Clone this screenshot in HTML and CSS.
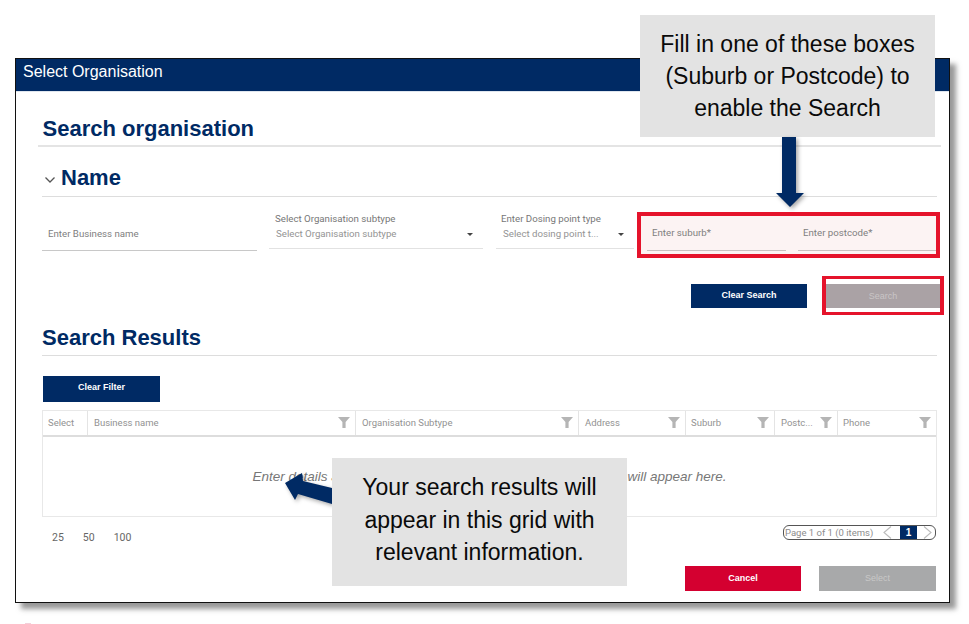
FILE: index.html
```html
<!DOCTYPE html>
<html lang="en">
<head>
<meta charset="utf-8">
<title>Select Organisation</title>
<link rel="stylesheet" href="styles.css">
</head>
<body>
<main class="window">
  <header class="titlebar">Select Organisation</header>
  <div class="content">
    <h1 class="h-main">Search organisation</h1>
    <div class="h-name">
      <svg class="chev" width="12" height="8" viewBox="0 0 12 8"><path d="M1.5 1.5 6 6l4.5-4.5" fill="none" stroke="#555" stroke-width="1.3"/></svg>
      <h2>Name</h2>
    </div>
    <div class="filters">
      <div class="field f-biz"><span class="val">Enter Business name</span></div>
      <div class="field f-sub">
        <span class="lbl">Select Organisation subtype</span>
        <span class="val">Select Organisation subtype</span>
        <i class="caret"></i>
      </div>
      <div class="field f-dose">
        <span class="lbl">Enter Dosing point type</span>
        <span class="val">Select dosing point t...</span>
        <i class="caret"></i>
      </div>
      <div class="required">
        <div class="field f-sb"><span class="val">Enter suburb*</span></div>
        <div class="field f-pc"><span class="val">Enter postcode*</span></div>
      </div>
    </div>
    <div class="actions">
      <button class="btn navy">Clear Search</button>
      <div class="red-frame"><button class="btn mauve">Search</button></div>
    </div>
    <h1 class="h-results">Search Results</h1>
    <button class="btn navy clear-filter">Clear Filter</button>
    <div class="grid">
      <div class="grid-head">
        <div class="col c1"><span>Select</span></div>
        <div class="col c2"><span>Business name</span><svg class="flt" viewBox="0 0 12 11"><path d="M0 0h12L7.6 5v6H4.4V5z"/></svg></div>
        <div class="col c3"><span>Organisation Subtype</span><svg class="flt" viewBox="0 0 12 11"><path d="M0 0h12L7.6 5v6H4.4V5z"/></svg></div>
        <div class="col c4"><span>Address</span><svg class="flt" viewBox="0 0 12 11"><path d="M0 0h12L7.6 5v6H4.4V5z"/></svg></div>
        <div class="col c5"><span>Suburb</span><svg class="flt" viewBox="0 0 12 11"><path d="M0 0h12L7.6 5v6H4.4V5z"/></svg></div>
        <div class="col c6"><span>Postc...</span><svg class="flt" viewBox="0 0 12 11"><path d="M0 0h12L7.6 5v6H4.4V5z"/></svg></div>
        <div class="col c7"><span>Phone</span><svg class="flt" viewBox="0 0 12 11"><path d="M0 0h12L7.6 5v6H4.4V5z"/></svg></div>
      </div>
      <div class="grid-body">Enter details above and then click Search. Your search results will appear here.</div>
    </div>
    <div class="pager-row">
      <div class="sizes"><span>25</span><span>50</span><span>100</span></div>
      <div class="pager">
        <span class="info">Page 1 of 1 (0 items)</span>
        <svg class="pg-arrow" width="9" height="13" viewBox="0 0 9 13"><path d="M8 .5 1 6.5l7 6" fill="none" stroke="#bbb" stroke-width="1.1"/></svg>
        <span class="cur">1</span>
        <svg class="pg-arrow" width="9" height="13" viewBox="0 0 9 13"><path d="M1 .5 8 6.5l-7 6" fill="none" stroke="#bbb" stroke-width="1.1"/></svg>
      </div>
    </div>
    <div class="footer">
      <button class="btn red">Cancel</button>
      <button class="btn grey">Select</button>
    </div>
  </div>
</main>

<div class="callout call-top">Fill in one of these boxes (Suburb or Postcode) to enable the Search</div>
<svg class="arrow arrow-down" width="40" height="76" viewBox="0 0 40 76"><path d="M12 0h14v56h8L20 70 6 56h6z" fill="#002a64"/></svg>
<svg class="arrow arrow-left" width="60" height="44" viewBox="0 0 60 44"><path d="M4 15 21 5l1 8 29 7v16L17 26l-3 6z" fill="#002a64"/></svg>
<div class="callout call-bottom">Your search results will appear in this grid with relevant information.</div>
<span class="speck"></span>
</body>
</html>
```
FILE: styles.css
```css
* { box-sizing: border-box; }
html, body { margin: 0; padding: 0; background: #fff; }
body { width: 969px; height: 624px; overflow: hidden; position: relative; font-family: "Liberation Sans", Arial, sans-serif; }

.window { width: 935px; height: 545px; margin: 58px 0 0 15px; border: 1px solid #111; background: #fff; box-shadow: 6px 6px 5px rgba(70,70,70,.55); }
.titlebar { height: 33px; background: #002a64; color: #fff; font-size: 16px; line-height: 26px; padding-left: 7px; border-bottom: 1px solid #dfe6ee; }
.content { padding: 0 9px 0 26px; }

.h-main, .h-results { margin: 0; color: #002a64; font-weight: 700; font-size: 22px; }
.h-main { width: 903px; margin-left: -4px; padding: 24px 0 4px 4.500px; height: 55px; line-height: 26px; border-bottom: 2px solid #e4e4e4; }
.h-name { display: flex; align-items: center; height: 50px; border-bottom: 1px solid #ddd; width: 895px; padding-left: 2px; }
.h-name h2 { margin: 0 0 0 5px; color: #002a64; font-size: 22px; font-weight: 700; padding-top: 19px; height: 50px; line-height: 24px; }
.chev { margin-top: 16px; }

.filters { display: flex; height: 66px; padding-top: 15px; }
.field { position: relative; color: #808080; font: 9.7px/14px Roboto, sans-serif; display: flex; flex-direction: column; }
.lbl { color: #777; position: absolute; top: 0; white-space: nowrap; }
.val { position: absolute; white-space: nowrap; }
.f-biz { width: 215px; height: 39px; border-bottom: 1px solid #c8c8c8; }
.f-biz .val { top: 15px; left: 6px; }
.f-sub { width: 214px; height: 37px; margin-left: 12px; border-bottom: 1px solid #e2e2e2; }
.f-sub .lbl { left: 6px; }
.f-sub .val { left: 7px; top: 15px; color: #949494; }
.f-dose { width: 138px; height: 37px; margin-left: 13px; border-bottom: 1px solid #e2e2e2; }
.f-dose .lbl { left: 5px; }
.f-dose .val { left: 7px; top: 15px; color: #949494; }
.caret { position: absolute; top: 21px; right: 10px; width: 0; height: 0; border: 3px solid transparent; border-top: 3px solid #444; border-bottom: 0; }
.required { display: flex; width: 303px; height: 46px; margin: 0 0 0 3px; border: 4px solid #e5132b; background: #fcf3f3; }
.f-sb { width: 139px; height: 35px; margin-left: 6px; border-bottom: 1px solid #c9c0c0; }
.f-pc { width: 138px; height: 35px; margin-left: 12px; border-bottom: 1px solid #c9c0c0; }
.f-sb .val, .f-pc .val { left: 5px; top: 10px; }

.btn { display: block; border: 0; padding: 0; font: 700 9px/1 "Liberation Sans", sans-serif; color: #fff; text-align: center; }
.navy { background: #002a64; }
.actions { display: flex; align-items: center; justify-content: flex-end; height: 39px; margin: 13px -4px 0 0; }
.actions .navy { width: 116px; height: 24px; }
.red-frame { width: 122px; height: 39px; margin-left: 15px; padding: 4px 0; border: 4px solid #e5132b; border-width: 3px 4px; background: #fff; }
.mauve { width: 114px; height: 24px; margin-top: 1px; background: #aaa2a5; color: #c9c5c6; font-weight: 400; }

.h-results { height: 40px; margin-top: 1px; padding-top: 9px; line-height: 26px; border-bottom: 1px solid #ddd; width: 895px; }
.clear-filter { width: 117px; height: 26px; margin: 20px 0 8px 1px; padding-bottom: 3px; }

.grid { width: 895px; border: 1px solid #e8e8e8; }
.grid-head { display: flex; height: 26px; border-bottom: 2px solid #ddd; }
.col { position: relative; height: 24px; border-right: 1px solid #e4e4e4; color: #929292; font: 9.5px/24px Roboto, sans-serif; padding-left: 6px; white-space: nowrap; }
.c1 { width: 45px; padding-left: 5px; }
.c2 { width: 268px; }
.c3 { width: 223px; }
.c4 { width: 107px; }
.c5 { width: 89px; padding-left: 5px; }
.c6 { width: 63px; }
.c7 { width: 98px; border-right: 0; padding-left: 5px; }
.flt { position: absolute; top: 6px; right: 5px; width: 12px; height: 11px; fill: #b5b5b5; }
.grid-body { height: 79px; text-align: center; font: italic 13.5px/79px "Liberation Sans", sans-serif; color: #777; white-space: nowrap; }

.pager-row { display: flex; justify-content: space-between; width: 894px; height: 24px; padding-top: 8px; }
.sizes { display: flex; gap: 19px; padding: 6px 0 0 10px; font: 10.5px/14px Roboto, sans-serif; color: #666; }
.pager { display: flex; align-items: center; width: 153px; height: 15px; border: 1px solid #555; border-radius: 6px; font: 9.5px/13px Roboto, sans-serif; color: #8c8c8c; padding-left: 1px; }
.info { width: 98px; white-space: nowrap; }
.cur { width: 17px; height: 13px; margin: 0 6px 0 8px; background: #002a64; color: #fff; font: 700 10px/13px "Liberation Sans", sans-serif; text-align: center; }

.footer { display: flex; justify-content: flex-end; gap: 18px; width: 894px; margin-top: 25px; }
.footer .btn { height: 25px; }
.red { width: 116px; background: #d40030; }
.grey { width: 117px; background: #a8a9aa; color: #c8c8c8; font-weight: 400; }

.callout { position: absolute; background: #e3e3e3; color: #0a0a0a; text-align: center; font-size: 23px; line-height: 32px; }
.call-top { left: 640px; top: 15px; width: 295px; height: 122px; padding: 13px 10px; }
.call-bottom { left: 332px; top: 458px; width: 295px; height: 128px; padding: 13px 22px; line-height: 32.5px; }
.arrow { position: absolute; filter: drop-shadow(2px 2px 2px rgba(0,0,0,.35)); }
.arrow-down { left: 770px; top: 137px; }
.arrow-left { left: 281px; top: 468px; }
.speck { position: absolute; left: 25px; top: 623px; width: 6px; height: 1px; background: #f3d0da; }
```
